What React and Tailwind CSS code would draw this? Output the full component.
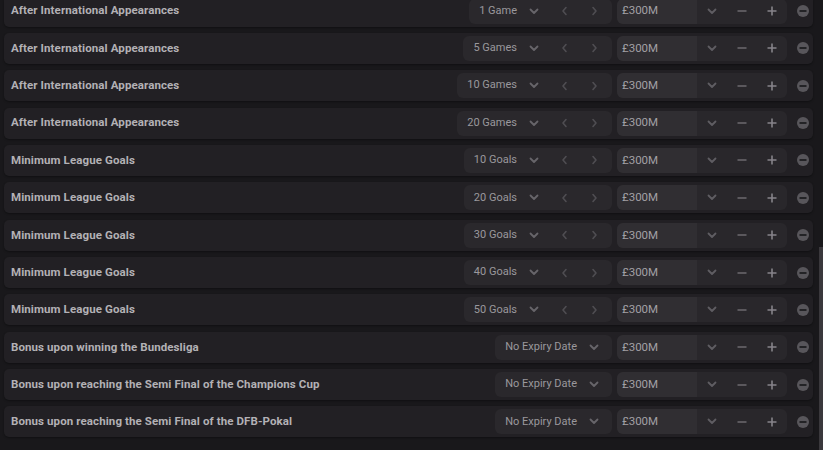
import React from "react";

const rows = [
  ["After International Appearances", "1 Game", true],
  ["After International Appearances", "5 Games", true],
  ["After International Appearances", "10 Games", true],
  ["After International Appearances", "20 Games", true],
  ["Minimum League Goals", "10 Goals", true],
  ["Minimum League Goals", "20 Goals", true],
  ["Minimum League Goals", "30 Goals", true],
  ["Minimum League Goals", "40 Goals", true],
  ["Minimum League Goals", "50 Goals", true],
  ["Bonus upon winning the Bundesliga", "No Expiry Date", false],
  ["Bonus upon reaching the Semi Final of the Champions Cup", "No Expiry Date", false],
  ["Bonus upon reaching the Semi Final of the DFB-Pokal", "No Expiry Date", false],
];

const ChevronDown = ({ color = "#67656a" }) => (
  <svg width="10" height="7" viewBox="0 0 10 7" fill="none">
    <path d="M1.5 1.5 L5 5 L8.5 1.5" stroke={color} strokeWidth="1.8" strokeLinecap="round" strokeLinejoin="round" />
  </svg>
);

const ChevronLeft = () => (
  <svg width="7" height="10" viewBox="0 0 7 10" fill="none">
    <path d="M5 1.5 L2 5 L5 8.5" stroke="#4f4d52" strokeWidth="1.6" strokeLinecap="round" strokeLinejoin="round" />
  </svg>
);

const ChevronRight = () => (
  <svg width="7" height="10" viewBox="0 0 7 10" fill="none">
    <path d="M2 1.5 L5 5 L2 8.5" stroke="#4f4d52" strokeWidth="1.6" strokeLinecap="round" strokeLinejoin="round" />
  </svg>
);

const Minus = () => (
  <svg width="10" height="10" viewBox="0 0 10 10" fill="none">
    <path d="M0.5 5 H9.5" stroke="#6c6a6f" strokeWidth="1.6" />
  </svg>
);

const Plus = () => (
  <svg width="10" height="10" viewBox="0 0 10 10" fill="none">
    <path d="M0.5 5 H9.5 M5 0.5 V9.5" stroke="#86848a" strokeWidth="1.6" />
  </svg>
);

const RemoveIcon = () => (
  <svg width="12" height="12" viewBox="0 0 12 12">
    <circle cx="6" cy="6" r="6" fill="#58565b" />
    <rect x="2.5" y="5.1" width="7" height="1.8" fill="#1f1e21" />
  </svg>
);

function Row({ label, value, arrows }) {
  return (
    <div className="h-[31px] shrink-0 rounded-[5px] bg-[#222024] flex items-center pl-[7px] pr-[4px] shadow-[0_1px_2px_rgba(0,0,0,0.35)]">
      <div className="flex-1 text-[11.5px] font-bold text-[#b3b1b5] tracking-[0.1px]">{label}</div>
      <div className="h-[25px] rounded-[6px] bg-[#2a282c] flex items-center pl-[10px] pr-[3px]">
        <span className="text-[11px] text-[#9a989d] pr-[2px]">{value}</span>
        <div className="w-[30px] flex items-center justify-center">
          <ChevronDown />
        </div>
        {arrows && (
          <>
            <div className="w-[30px] flex items-center justify-center">
              <ChevronLeft />
            </div>
            <div className="w-[30px] flex items-center justify-center">
              <ChevronRight />
            </div>
          </>
        )}
      </div>
      <div className="ml-[5px] h-[25px] w-[170px] rounded-[6px] bg-[#29272b] flex items-center overflow-hidden">
        <div className="w-[80px] h-full bg-[#302e32] flex items-center pl-[5px] text-[11.5px] text-[#a2a0a5]">
          £300M
        </div>
        <div className="w-[30px] flex items-center justify-center">
          <ChevronDown color="#5f5d62" />
        </div>
        <div className="w-[30px] flex items-center justify-center">
          <Minus />
        </div>
        <div className="w-[30px] flex items-center justify-center">
          <Plus />
        </div>
      </div>
      <div className="w-[12px] ml-[10px] flex items-center justify-center">
        <RemoveIcon />
      </div>
    </div>
  );
}

export default function App() {
  return (
    <div
      className="relative w-[823px] h-[450px] overflow-hidden bg-[#19181b]"
      style={{ fontFamily: "Roboto, 'Liberation Sans', sans-serif" }}
    >
      <div className="flex flex-col gap-[6.36px] mt-[-4.5px] pl-[4px] pr-[10px]">
        {rows.map(([l, v, a], i) => (
          <Row key={i} label={l} value={v} arrows={a} />
        ))}
      </div>
      <div className="absolute right-0 top-[247px] w-[4px] h-[203px] bg-[#3a383c]" />
    </div>
  );
}
